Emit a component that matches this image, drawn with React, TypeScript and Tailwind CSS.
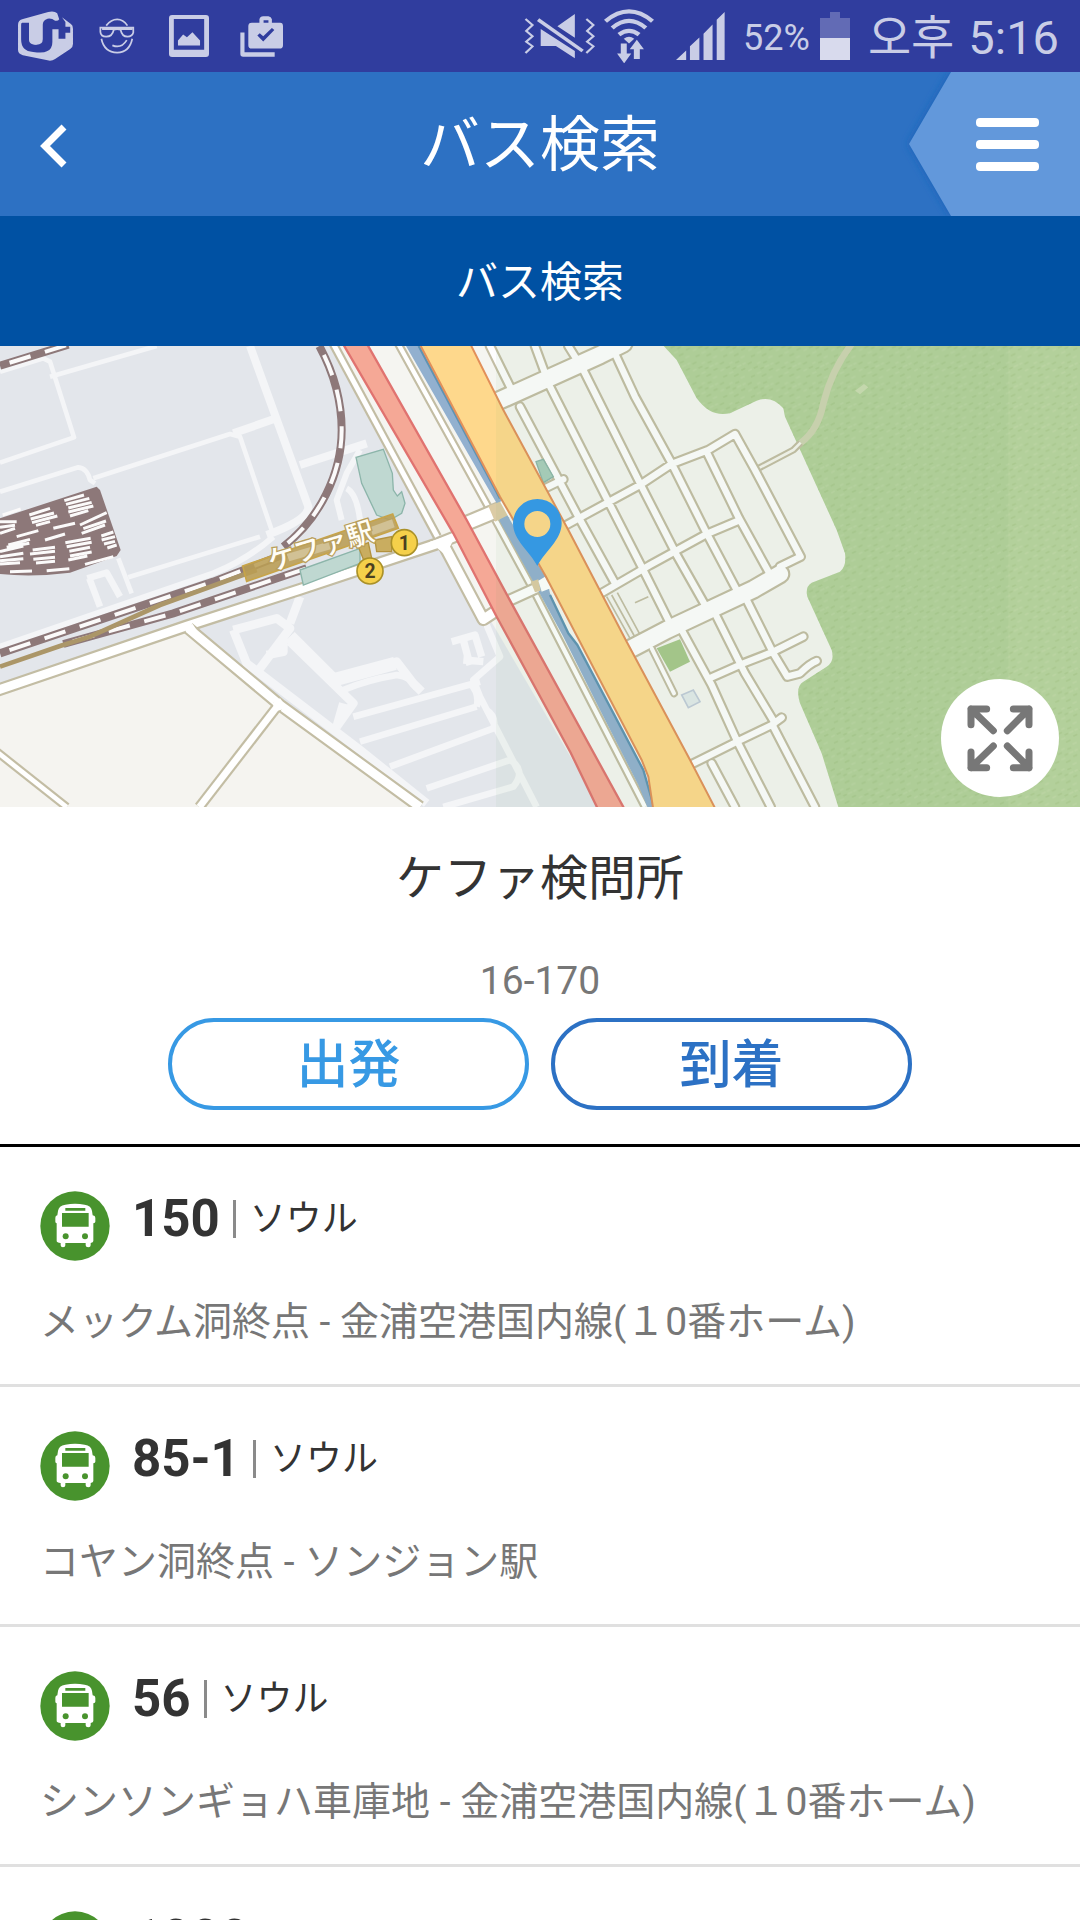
import React from "react";

type Route = { no: string; region?: string; path?: string };

const routes: Route[] = [
  { no: "150", region: "ソウル", path: "メックム洞終点 - 金浦空港国内線(１0番ホーム)" },
  { no: "85-1", region: "ソウル", path: "コヤン洞終点 - ソンジョン駅" },
  { no: "56", region: "ソウル", path: "シンソンギョハ車庫地 - 金浦空港国内線(１0番ホーム)" },
  { no: "1000" },
];

function StatusBar() {
  return (
    <div className="flex h-[72px] shrink-0 items-center justify-between bg-[#303d9e] pl-[17px] pr-[21px] text-[#c9cde6]">
      <div className="flex items-center">
        <svg className="h-[50px] w-[57px]" viewBox="49 33 166 150" preserveAspectRatio="none" fill="currentColor" aria-hidden="true">
          <path d="M52 74Q52 62 64 58L140 36Q158 32 166 40L172 58Q168 64 160 62Q150 54 138 56Q124 60 124 74V118Q124 134 106 134Q84 136 84 118V68H64Q61 68 61 74V118Q61 154 96 156Q126 160 136 154Q152 148 152 126V88H170V116H190V98H204V80H190V66L180 52L206 72Q212 76 212 86V132Q212 142 204 147L160 177Q150 184 138 181L66 166Q52 161 52 150Z" />
          <path d="M84 68H122V118Q122 132 106 133Q86 135 84 118Z" />
        </svg>
        <svg className="ml-[25px] h-[36px] w-[36px]" viewBox="287 58 105 104" preserveAspectRatio="none" fill="none" stroke="currentColor" strokeWidth="5" aria-hidden="true">
          <path d="M308 80Q322 62 340 62Q358 62 370 80M294 118Q302 157 340 158Q376 157 384 118M326 137Q352 148 368 122M291 86H387V100Q384 112 370 112Q354 112 350 92Q340 88 330 92Q326 112 308 112Q292 112 291 98ZM296 90H384" />
        </svg>
        <svg className="ml-[34px] h-[42px] w-[40px]" viewBox="491 45 116 127" preserveAspectRatio="none" fill="currentColor" aria-hidden="true">
          <path fillRule="evenodd" d="M500 45H598Q607 45 607 54V163Q607 172 598 172H500Q491 172 491 163V54Q491 45 500 45ZM505 57V150H593V57Z" />
          <path d="M517 137V122L532 104L543 112L559 97L581 122V137Z" />
        </svg>
        <svg className="ml-[31px] h-[41px] w-[43px]" viewBox="696 50 124 122" preserveAspectRatio="none" fill="currentColor" aria-hidden="true">
          <path d="M697 99H709V158H796V171H705Q697 171 697 163Z" />
          <path fillRule="evenodd" d="M752 70V60Q754 51 763 51H778Q786 52 788 60V70H812Q820 70 820 80V137Q820 147 810 147H730Q720 147 720 137V80Q720 70 730 70ZM764 70H778V63H764ZM746 108L763 126L795 92L788 86L763 110L753 101Z" />
        </svg>
      </div>
      <div className="flex items-center">
        <svg className="h-[46px] w-[72px]" viewBox="66 38 194 138" preserveAspectRatio="none" fill="currentColor" aria-hidden="true">
          <path d="M203 41V112L156 78ZM111 86L182 137L203 152V174L152 137H111Z" />
          <path d="M104 58L224 152" stroke="#c9cde6" strokeWidth="10" />
          <path d="M70 56L89 74L72 92L89 108L72 124L89 138L70 158M234 56L253 74L236 92L253 108L236 124L253 138L234 158" fill="none" stroke="#c9cde6" strokeWidth="6" />
        </svg>
        <svg className="ml-[8px] h-[54px] w-[50px]" viewBox="282 26 134 160" preserveAspectRatio="none" fill="none" stroke="currentColor" strokeWidth="12" aria-hidden="true">
          <path d="M286 62Q349 4 412 62M304 82Q349 40 394 82M322 102Q349 80 376 102" />
          <path d="M335 114Q349 102 363 114L349 128Z" fill="currentColor" stroke="none" />
          <path d="M327 128H343V158H355L336 187L317 158H327ZM362 174V145H351L370 117L389 145H378V174Z" fill="currentColor" stroke="none" />
        </svg>
        <svg className="ml-[22px] h-[48px] w-[49px]" viewBox="479 37 130 143" preserveAspectRatio="none" fill="currentColor" aria-hidden="true">
          <path d="M479 180L506 152V180ZM516 180V139L541 113V180ZM552 180V102L576 74V180ZM587 180V60L608 37V180Z" />
        </svg>
        <span className="ml-[18px] pt-1 text-[36px] leading-[48px]">52%</span>
        <svg className="ml-[10px] h-[48px] w-[30px]" viewBox="0 0 30 48" aria-hidden="true">
          <path d="M10 0H20V6H30V26H0V6H10Z" fill="#626bb5" />
          <path d="M0 26H30V48H0Z" fill="#d8daed" />
        </svg>
        <span className="ml-[18px] pt-1 text-[47px] leading-[60px]">오후</span>
        <span className="ml-[14px] pt-1 text-[47px] leading-[60px]">5:16</span>
      </div>
    </div>
  );
}

function Header() {
  return (
    <header className="relative flex h-[144px] shrink-0 items-center justify-center bg-[#2d71c3] text-white">
      <button type="button" aria-label="戻る" className="absolute inset-y-0 left-0 flex w-[108px] items-center pl-[40px] pt-[3px]">
        <svg className="h-[44px] w-[28px]" viewBox="0 0 28 44" fill="none" stroke="white" strokeWidth="7" aria-hidden="true">
          <path d="M24 3L5 22L24 41" />
        </svg>
      </button>
      <h1 className="pt-1 text-[60px] leading-[80px]">バス検索</h1>
      <button type="button" aria-label="メニュー" className="absolute inset-y-0 right-0">
        <svg className="h-[144px] w-[181px]" viewBox="0 0 181 144" aria-hidden="true">
          <defs>
            <filter id="edge" x="-10%" y="-10%" width="120%" height="120%">
              <feGaussianBlur stdDeviation="4" />
            </filter>
          </defs>
          <path d="M52 0L10 72L52 144H181V0Z" fill="#1c62b8" filter="url(#edge)" />
          <path d="M52 0L10 72L52 144H181V0Z" fill="#6298db" />
          <g fill="white">
            <rect x="77" y="46" width="63" height="9" rx="4" />
            <rect x="77" y="68" width="63" height="9" rx="4" />
            <rect x="77" y="90" width="63" height="9" rx="4" />
          </g>
        </svg>
      </button>
    </header>
  );
}

function Rail({ d }: { d: string }) {
  return (
    <g fill="none">
      <path d={d} stroke="#8d7879" strokeWidth="24" />
      <path d={d} stroke="#fbfafa" strokeWidth="12" strokeDasharray="66 45" strokeDashoffset="-30" />
    </g>
  );
}

function Road({ d, w, fill = "#ffffff" }: { d: string; w: number; fill?: string }) {
  return (
    <g fill="none" strokeLinejoin="round">
      <path d={d} stroke="#c3bda4" strokeWidth={w + 13} />
      <path d={d} stroke={fill} strokeWidth={w} />
    </g>
  );
}

const lanes =
  "M1470 18L1540 160M1560 200L1735 530L1845 730M1605 18L1650 140L1820 475L1930 690L2015 860M1705 18L1750 90L1920 430L2030 645L2115 795M1840 30L1905 170L2015 370L2120 580L2210 750M2045 870L2135 1035L2212 1205L2312 1401M2122 340L2217 535L2308 700M2145 820L2235 1000L2322 1145L2320 1160L2445 1401M2125 330L2205 282L2265 390L2402 650L2340 680M2240 780L2320 940L2362 1010L2400 1000Q2430 970 2450 963M2135 1270L2205 1401M1635 445L1690 418M1690 560L1920 435L2015 372L2125 330M1795 765L1950 675L2120 582L2220 540M2135 1012L2230 970L2320 935L2410 890M2070 1275L2215 1203L2315 1155L2345 1133";
const lots = "M1955 925L2022 1060";
const avenues = "M1490 185L1800 45L1870 10M1885 930L2000 870L2260 748L2340 702";

const yardDashes =
  "M8 525L62 507M0 545L50 545M0 562L45 556M0 580L45 565M88 525L150 505M92 537L162 519M96 548L172 528M108 556L150 545M193 482L252 465M198 493L268 475M205 504L275 487M205 516L280 498M210 528L265 512M50 590L115 572M160 565L225 550M240 555L320 518M250 566L318 543M25 615L90 598M20 622L88 610M135 600L195 582M245 580L315 555M0 635L70 618M98 630L165 622M0 650L70 640M0 662L70 656M90 642L165 634M196 608L272 595M200 620L275 607M208 634L270 622M210 648L275 636M304 588L340 576M305 600L345 590M312 612L345 604M322 624L350 615M0 672L60 668M100 658L165 652M108 669L165 664M205 660L262 648M255 673L340 650M30 695L96 693M140 692L208 686";

const forest =
  "M1970 -5L2030 60L2090 175C2120 215 2150 228 2190 220L2270 182Q2315 165 2350 205L2355 230L2510 570L2535 640Q2540 680 2520 695L2435 728Q2415 740 2422 770L2495 930Q2505 965 2480 980L2410 1025Q2385 1040 2400 1090L2465 1240L2515 1401H3240V0Z";

function StationMap() {
  return (
    <svg className="h-[461px] w-full" viewBox="0 18 3240 1383" preserveAspectRatio="xMidYMid slice" role="img" aria-label="ケファ駅">
      <defs>
        <pattern id="grass" width="83" height="61" patternUnits="userSpaceOnUse">
          <path d="M2 12L14 5M20 24L32 18M48 8L60 3M66 30L78 24M12 50L24 44M44 48L58 41M40 26L50 21" stroke="#a2c184" strokeWidth="5" opacity="0.5" />
          <path d="M4 32L14 26M30 10L40 5M54 20L66 14M30 40L42 34M64 54L76 48M70 12L79 8" stroke="#bfd6a6" strokeWidth="5" opacity="0.6" />
        </pattern>
      </defs>
      <rect y="18" width="3240" height="1383" fill="#e3e6eb" />
      <path d="M0 1055L560 865L840 1095L1265 1401H0Z" fill="#f5f4f0" />
      <path d="M1000 18L1330 600L1800 1401H3240V18Z" fill="#f5f5f1" />

      <g fill="none" stroke="#f4f5f7" strokeLinejoin="round">
        <path d="M0 95L130 55L150 65L222 292L0 368M150 110L470 18M0 455L235 382Q262 385 270 420L285 430M280 415L690 282L720 290L815 570M355 655L395 760M385 712L780 590" strokeWidth="14" />
        <path d="M750 18L925 500Q925 540 800 585M700 280L820 238M900 375L1100 310" strokeWidth="24" />
        <path d="M0 920L640 700Q740 660 820 590M1080 330L1040 400L1010 480L1025 540M1040 445Q1070 460 1080 540" strokeWidth="18" />
        <path d="M262 715L320 698L360 770M268 715L300 800" strokeWidth="20" />
        <path d="M900 770L870 850M700 870L830 835L870 865L780 985M870 890L1000 1015L1190 965L1240 1030L1265 1055M700 870L740 970L1080 1230L1280 1390M850 890L850 935L800 945M870 905L1060 1090L1010 1160M1010 1160L1030 1090" strokeWidth="26" />
        <path d="M870 890L1000 1020L1185 970" strokeWidth="40" />
        <path d="M1355 905L1425 885L1445 950M1390 900L1410 975M1390 960L1450 965" strokeWidth="22" />
        <path d="M1030 1050Q1100 1020 1190 1005Q1235 1010 1250 1045M1060 1130L1440 1025M1080 1205L1430 1100M1170 1280L1480 1165M1280 1345L1530 1260M1460 855L1500 950L1420 1020L1440 1070L1610 1401M1530 1260Q1580 1290 1540 1340L1330 1401M1430 1100Q1440 1060 1410 1030M1480 1165Q1490 1130 1460 1110" strokeWidth="20" />
      </g>

      <path d="M0 535L290 440L300 450L362 630L350 648L210 698Q100 712 0 702Z" fill="#8d7879" />
      <path d={yardDashes} fill="none" stroke="#fbfafa" strokeWidth="9" />

      <Road d="M-20 1055L560 858L900 748L1310 612L1370 588" w={26} />
      <Road d="M565 865L840 1095L1260 1401" w={26} />
      <Road d="M835 1095L598 1401" w={20} />
      <Road d="M-10 1235L200 1401" w={14} />
      <Road d="M1000 12L1312 590" w={15} />
      <Road d="M1330 612L1450 838L1485 815" w={28} />
      <path d="M548 858L578 852L600 885L560 875ZM1290 605L1370 580L1350 620L1330 640ZM815 1090L840 1075L862 1105L832 1112Z" fill="white" />

      <Rail d="M0 77L205 14" />
      <Rail d="M958 18C1005 105 1025 190 1025 270C1025 400 960 535 850 620" />
      <Rail d="M0 940L640 725L860 640" />
      <Rail d="M190 912L520 820L920 685" />
      <path d="M0 980L180 918L270 890L480 795L770 690" fill="none" stroke="#ab9668" strokeWidth="14" />

      <path d="M1068 352L1150 328L1177 400L1180 450L1192 468L1205 455L1215 490L1205 520L1170 540L1130 525L1085 430Z" fill="#bfd8d1" stroke="#8cb5aa" strokeWidth="4" />
      <path d="M900 690L1080 625V670L910 735Z" fill="#bfd8d1" stroke="#8cb5aa" strokeWidth="4" />
      <path d="M728 678L1178 522L1195 565L740 724Z" fill="#b99d53" fillOpacity="0.88" stroke="#c7a449" strokeWidth="5" />
      <path d="M1110 562L1176 538L1184 562L1118 585ZM860 642L985 605L992 628L868 664Z" fill="#d1c195" />
      <path d="M1075 620L1105 608L1115 655L1095 670ZM1125 600L1175 590V635L1130 635Z" fill="#c9ad60" stroke="#b3923f" strokeWidth="4" />
      <text x="960" y="648" transform="rotate(-17 960 612)" textAnchor="middle" fontSize="82" fontWeight="500" fill="#fffdf6" stroke="#b99f5c" strokeWidth="8" paintOrder="stroke">ケファ駅</text>

      <path d={forest} fill="#b3d09b" />
      <path d={forest} fill="url(#grass)" />
      <path d="M2400 310Q2455 270 2470 190Q2495 90 2555 12" fill="none" stroke="#ced3b2" strokeWidth="20" />
      <path d="M2565 152L2592 132L2605 142L2580 163Z" fill="#cbdab2" />

      <Road d="M2275 385L2380 330L2402 308" w={8} fill="#f5f4ee" />
      <g fill="none" strokeLinejoin="round" strokeLinecap="round">
        <path d={lanes} stroke="#c3bda4" strokeWidth="32" />
        <path d={lots} stroke="#c3bda4" strokeWidth="24" />
        <path d={avenues} stroke="#c3bda4" strokeWidth="62" />
        <path d={lanes} stroke="#fefdfe" strokeWidth="19" />
        <path d={lots} stroke="#fefdfe" strokeWidth="12" />
        <path d={avenues} stroke="#fefdfe" strokeWidth="49" />
      </g>
      <path d="M1970 925L2040 898L2070 965L2010 995Z" fill="#a8c78c" />
      <path d="M2045 1065L2080 1050L2100 1085L2065 1103Z" fill="#e2e9ea" stroke="#c1cbd9" strokeWidth="5" />
      <path d="M1820 770L1890 895M1835 765L1903 888M1852 758L1918 880M1945 770L1905 788" stroke="#c3bda4" strokeWidth="5" />
      <path d="M1608 365L1630 358L1660 410L1630 428Z" fill="#a9cdbc" stroke="#8cb5aa" strokeWidth="4" />

      <Road d="M1195 12L1470 510L1600 750L1935 1401" w={13} />
      <Road d="M1380 558L1520 500" w={38} />
      <Road d="M1530 780L1640 730" w={26} />
      <path d="M1218 18H1258L1505 480L1530 540L1640 715L1650 760L1705 880L1732 915L1930 1290L1965 1401H1942L1915 1335L1800 1110L1690 890L1600 725L1500 545L1490 490Z" fill="#92b0cf" />
      <path d="M1256 18L1500 475M1650 765L1705 880L1732 915L1930 1290L1962 1401" fill="none" stroke="#5f93b3" strokeWidth="7" />
      <path d="M1465 498L1500 485L1525 525L1485 545ZM1592 725L1615 718L1622 752L1605 757Z" fill="#dccba5" />
      <path d="M1500 485L1512 480L1540 530L1525 530ZM1615 722L1635 710L1652 745L1625 755Z" fill="white" />

      <path d="M1258 10L1500 470L1638 710L1925 1260L1945 1310L1960 1410H2148L2065 1250L1880 905L1705 570L1510 210L1410 10Z" fill="#fed88c" stroke="#e2905a" strokeWidth="6" />
      <path d="M1028 10L1360 580L1490 830L1712 1238L1795 1410H1875L1540 800L1400 540L1100 10Z" fill="#f5a896" stroke="#e07370" strokeWidth="7" />

      <rect x="1488" y="18" width="1537" height="1383" fill="#64aa64" fillOpacity="0.055" />

      <g fontSize="58" fontWeight="700" textAnchor="middle">
        <circle cx="1213" cy="608" r="39" fill="#f5d04a" stroke="#aa9128" strokeWidth="5" />
        <text x="1213" y="629" fill="#4a4021">1</text>
        <circle cx="1110" cy="693" r="39" fill="#f5d04a" stroke="#aa9128" strokeWidth="5" />
        <text x="1110" y="714" fill="#4a4021">2</text>
      </g>
      <path fillRule="evenodd" d="M1612 678C1590 635 1539 600 1539 550A73 73 0 0 1 1685 550C1685 600 1634 635 1612 678ZM1612 513A39 39 0 1 0 1612 591A39 39 0 1 0 1612 513Z" fill="#3598e2" />
    </svg>
  );
}

function BusIcon() {
  return (
    <svg className="h-[70px] w-[70px] shrink-0" viewBox="0 0 210 210" aria-hidden="true">
      <circle cx="105" cy="105" r="104" fill="#48932d" />
      <path d="M54 60Q56 44 76 41Q105 35 134 41Q154 44 156 60L158 73Q166 74 166 80V92Q166 96 160 97V150Q160 155 152 156V163Q152 169 145 169Q137 169 137 163V156H76V163Q76 169 69 169Q62 169 62 163V156Q50 155 50 150V97Q46 96 46 92V80Q46 74 52 73Z" fill="white" />
      <path d="M76 51H136V59H76ZM66 66H146V107H66Z" fill="#48932d" />
      <circle cx="77" cy="136" r="9" fill="#48932d" />
      <circle cx="135" cy="136" r="9" fill="#48932d" />
    </svg>
  );
}

function RouteRow({ no, region, path }: Route) {
  return (
    <li className="border-b-[3px] border-[#e0e0e0] px-[40px] pb-[32px] pt-[44px]">
      <a href="#" className="block">
        <div className="flex h-[70px] items-start">
          <BusIcon />
          <div className="ml-[22px] flex h-[56px] items-center">
            <strong className="text-[51px] font-bold leading-[56px] text-[#333333]">{no}</strong>
            {region && (
              <>
                <span className="ml-[13px] mr-[14px] h-[38px] w-[3px] bg-[#8a8a8a]" />
                <span className="text-[36px] leading-[56px] text-[#333333]">{region}</span>
              </>
            )}
          </div>
        </div>
        {path && <p className="mt-[31px] whitespace-nowrap text-[39px] leading-[60px] text-[#777777]">{path}</p>}
      </a>
    </li>
  );
}

export default function App() {
  return (
    <div className="flex h-screen flex-col overflow-hidden bg-white font-[Roboto,'Noto_Sans_CJK_JP',sans-serif]">
      <StatusBar />
      <Header />
      <h2 className="flex h-[130px] shrink-0 items-center justify-center bg-[#0051a3] pt-1 text-[42px] leading-[60px] text-white">バス検索</h2>
      <div className="relative shrink-0">
        <StationMap />
        <button type="button" aria-label="地図を拡大" className="absolute bottom-[10px] right-[21px] flex h-[118px] w-[118px] items-center justify-center rounded-full bg-white">
          <svg className="h-[68px] w-[68px]" viewBox="0 0 204 204" fill="none" stroke="#777777" strokeWidth="21" strokeLinecap="round" strokeLinejoin="round" aria-hidden="true">
            <path d="M62 15H15V62M15 15L82 80M142 15H189V62M189 15L124 80M62 191H15V144M15 191L82 126M142 191H189V144M189 191L124 126" />
          </svg>
        </button>
      </div>
      <section className="flex shrink-0 flex-col items-center border-b-[3px] border-black pb-[34px] pt-[42px]">
        <h3 className="text-[48px] leading-[60px] text-[#333333]">ケファ検問所</h3>
        <p className="mt-[48px] text-[39px] leading-[48px] text-[#777777]">16-170</p>
        <div className="mt-[13px] flex gap-[22px] text-[52px] font-medium leading-[80px]">
          <button type="button" className="h-[92px] w-[361px] rounded-full border-4 border-[#3799e4] pt-1 text-[#3799e4]">出発</button>
          <button type="button" className="h-[92px] w-[361px] rounded-full border-4 border-[#2c71c4] pt-1 text-[#2c71c4]">到着</button>
        </div>
      </section>
      <ul className="min-h-0 flex-1 overflow-hidden">
        {routes.map((r) => (
          <RouteRow key={r.no} {...r} />
        ))}
      </ul>
    </div>
  );
}
